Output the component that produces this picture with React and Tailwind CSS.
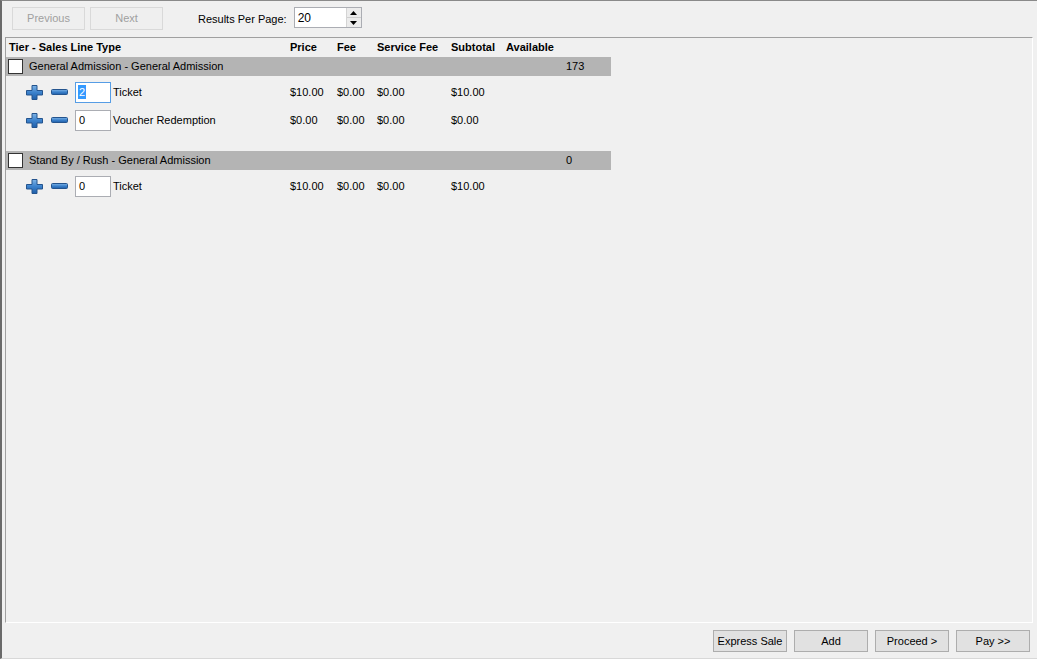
import React from "react";

const font = { fontFamily: '"Liberation Sans", Arial, sans-serif' };

const PlusIcon = () => (
  <svg width="17" height="15" viewBox="0 0 17 15">
    <defs>
      <linearGradient id="pg" x1="0" y1="0" x2="0" y2="1">
        <stop offset="0" stopColor="#7fb4e6" />
        <stop offset="0.5" stopColor="#3c82cc" />
        <stop offset="1" stopColor="#1f5ea8" />
      </linearGradient>
    </defs>
    <path
      d="M6 0.5h5v5h5.5v4.5h-5.5v4.5h-5v-4.5h-5.5v-4.5h5.5z"
      fill="url(#pg)"
      stroke="#24548e"
      strokeWidth="1"
    />
  </svg>
);

const MinusIcon = () => (
  <svg width="17" height="6" viewBox="0 0 17 6">
    <defs>
      <linearGradient id="mg" x1="0" y1="0" x2="0" y2="1">
        <stop offset="0" stopColor="#7fb4e6" />
        <stop offset="0.5" stopColor="#3c82cc" />
        <stop offset="1" stopColor="#1f5ea8" />
      </linearGradient>
    </defs>
    <rect x="0.5" y="0.5" width="16" height="5" rx="1" fill="url(#mg)" stroke="#24548e" />
  </svg>
);

const groups = [
  {
    name: "General Admission - General Admission",
    available: "173",
    items: [
      { qty: "2", label: "Ticket", price: "$10.00", fee: "$0.00", service: "$0.00", subtotal: "$10.00", focused: true },
      { qty: "0", label: "Voucher Redemption", price: "$0.00", fee: "$0.00", service: "$0.00", subtotal: "$0.00" },
    ],
  },
  {
    name: "Stand By / Rush - General Admission",
    available: "0",
    items: [
      { qty: "0", label: "Ticket", price: "$10.00", fee: "$0.00", service: "$0.00", subtotal: "$10.00" },
    ],
  },
];

const WinButton = ({ children, disabled }) => (
  <button
    className={
      disabled
        ? "w-[73px] h-[23px] border border-[#d9d9d9] bg-[#efefef] text-[#a0a0a0] text-[11px]"
        : "w-[74px] h-[22px] border border-[#adadad] bg-[#e1e1e1] text-black text-[11px]"
    }
  >
    {children}
  </button>
);

const ItemRow = ({ item }) => (
  <div className="flex items-center h-[28px] text-[11px] text-black">
    <div className="w-[284px] flex items-center pl-[20px]">
      <PlusIcon />
      <span className="ml-[8px] flex items-center">
        <MinusIcon />
      </span>
      <div
        className={
          "ml-[7px] w-[36px] h-[21px] bg-white border flex items-center pl-[2px] " +
          (item.focused ? "border-[#569de5]" : "border-[#abadb3]")
        }
      >
        {item.focused ? (
          <span className="bg-[#3399ff] text-white px-[1px] leading-[14px]">{item.qty}</span>
        ) : (
          <span className="pl-[1px]">{item.qty}</span>
        )}
      </div>
      <span className="ml-[2px]">{item.label}</span>
    </div>
    <div className="w-[47px]">{item.price}</div>
    <div className="w-[40px]">{item.fee}</div>
    <div className="w-[74px]">{item.service}</div>
    <div className="w-[55px]">{item.subtotal}</div>
  </div>
);

export default function App() {
  return (
    <div
      style={font}
      className="w-[1037px] h-[659px] bg-[#f0f0f0] border-l-[2px] border-t border-b border-l-[#6a6a6a] border-t-[#8a8a8a] border-b-[#d8d8d8] flex flex-col overflow-hidden"
    >
      {/* toolbar */}
      <div className="h-[36px] flex items-start pt-[6px] pl-[10px] shrink-0">
        <div className="flex gap-[5px]">
          <WinButton disabled>Previous</WinButton>
          <WinButton disabled>Next</WinButton>
        </div>
        <span className="ml-[35px] mt-[4px] text-[11px] text-black">Results Per Page:</span>
        <div className="ml-[7px] w-[68px] h-[21px] bg-white border border-[#abadb3] flex items-center justify-between">
          <span className="pl-[3px] text-[12px] text-black">20</span>
          <div className="w-[15px] h-full border-l border-[#d4d4d4] flex flex-col">
            <div className="flex-1 bg-[#ececec] border-b border-[#cfcfcf] flex items-center justify-center">
              <svg width="7" height="4" viewBox="0 0 7 4"><path d="M3.5 0L7 4H0z" fill="#000" /></svg>
            </div>
            <div className="flex-1 bg-[#ececec] flex items-center justify-center">
              <svg width="7" height="4" viewBox="0 0 7 4"><path d="M0 0h7L3.5 4z" fill="#000" /></svg>
            </div>
          </div>
        </div>
      </div>

      {/* grid panel */}
      <div className="ml-[3px] mr-[4px] flex-1 border-t border-l border-t-[#a0a0a0] border-l-[#a0a0a0] border-r border-b border-r-white border-b-white">
        <div className="w-[605px]">
          <div className="flex items-center h-[19px] text-[11px] font-bold text-black">
            <div className="w-[284px] pl-[3px]">Tier - Sales Line Type</div>
            <div className="w-[47px]">Price</div>
            <div className="w-[40px]">Fee</div>
            <div className="w-[74px]">Service Fee</div>
            <div className="w-[55px]">Subtotal</div>
            <div>Available</div>
          </div>
          {groups.map((g, gi) => (
            <div key={gi} className={gi === 0 ? "pb-[17px]" : ""}>
              <div className="flex items-center h-[19px] bg-[#b4b4b4] text-[11px] text-black">
                <div className="w-[560px] flex items-center">
                  <div className="ml-[2px] w-[15px] h-[15px] bg-white border border-[#333]" />
                  <span className="ml-[6px]">{g.name}</span>
                </div>
                <span>{g.available}</span>
              </div>
              <div className="pt-[2px]">
                {g.items.map((it, ii) => (
                  <ItemRow key={ii} item={it} />
                ))}
              </div>
            </div>
          ))}
        </div>
      </div>

      {/* footer */}
      <div className="h-[35px] shrink-0 flex items-start justify-end gap-[7px] pr-[7px] pt-[7px]">
        <WinButton>Express Sale</WinButton>
        <WinButton>Add</WinButton>
        <WinButton>Proceed &gt;</WinButton>
        <WinButton>Pay &gt;&gt;</WinButton>
      </div>
    </div>
  );
}
